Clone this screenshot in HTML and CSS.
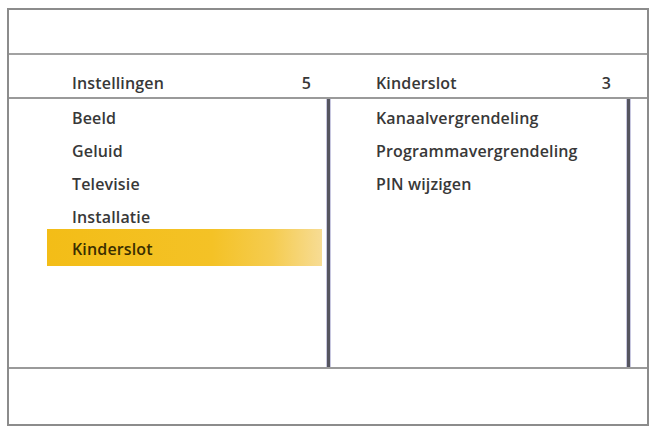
FILE: index.html
```html
<!DOCTYPE html>
<html lang="nl">
<head>
<meta charset="utf-8">
<title>Instellingen - Kinderslot</title>
<link rel="stylesheet" href="styles.css">
</head>
<body>
<div class="frame">
  <div class="topbar"></div>
  <div class="panes">
    <div class="header">
      <div class="hcell hcell-left"><span>Instellingen</span><span>5</span></div>
      <div class="hcell hcell-right"><span>Kinderslot</span><span>3</span></div>
      <div class="hstrip"></div>
    </div>
    <div class="body">
      <ul class="list list-left">
        <li class="item">Beeld</li>
        <li class="item">Geluid</li>
        <li class="item">Televisie</li>
        <li class="item">Installatie</li>
        <li class="item selected">Kinderslot</li>
      </ul>
      <ul class="list list-right">
        <li class="item">Kanaalvergrendeling</li>
        <li class="item">Programmavergrendeling</li>
        <li class="item">PIN wijzigen</li>
      </ul>
      <div class="strip"></div>
    </div>
  </div>
  <div class="bottombar"></div>
</div>
</body>
</html>
```

FILE: styles.css
```css
* { box-sizing: border-box; }
html, body { margin: 0; padding: 0; background: #ffffff; }
body {
  width: 654px;
  height: 428px;
  overflow: hidden;
  font-family: "Open Sans", "Liberation Sans", sans-serif;
  font-weight: 600;
  font-size: 16px;
  letter-spacing: 0.15px;
  color: #383838;
}
.frame {
  margin: 8px 5px 0 7px;
  width: 642px;
  height: 418px;
  border: 2px solid #8c8c8c;
  display: flex;
  flex-direction: column;
}
.topbar {
  height: 45px;
  border-bottom: 2px solid #a2a2a2;
  flex: none;
}
.panes {
  flex: none;
  display: flex;
  flex-direction: column;
  height: 314px;
  border-bottom: 2px solid #9a9a9a;
}
.header {
  display: flex;
  height: 44px;
  border-bottom: 2px solid #9a9a9a;
  flex: none;
}
.hcell {
  display: flex;
  justify-content: space-between;
  align-items: center;
  padding-top: 13px;
}
.hcell-left { width: 321px; padding-left: 63px; padding-right: 19px; }
.hcell-right { width: 300px; padding-left: 46px; padding-right: 19px; }
.hstrip { flex: 1; }
.body {
  flex: 1;
  display: flex;
}
.list {
  list-style: none;
  margin: 0;
  padding: 2px 0 0 0;
  border-right: 3px solid #55555f;
  box-shadow: 1px 0 0 #c8c8e0, inset -1px 0 0 #c8c8e0;
}
.list-left { width: 321px; }
.list-right { width: 300px; padding-left: 46px; }
.strip { flex: 1; }
.item {
  height: 33px;
  display: flex;
  align-items: center;
}
.list-left .item { padding-left: 63px; }
.list-left .item.selected {
  margin: -4px 5px 0 38px;
  height: 37px;
  padding-left: 25px;
  padding-top: 2px;
  color: #3a2e00;
  background: linear-gradient(to right, #f3bd17 0%, #f4c226 60%, #f5cc50 82%, #f7dc94 100%);
}
.bottombar { flex: 1; }
```
